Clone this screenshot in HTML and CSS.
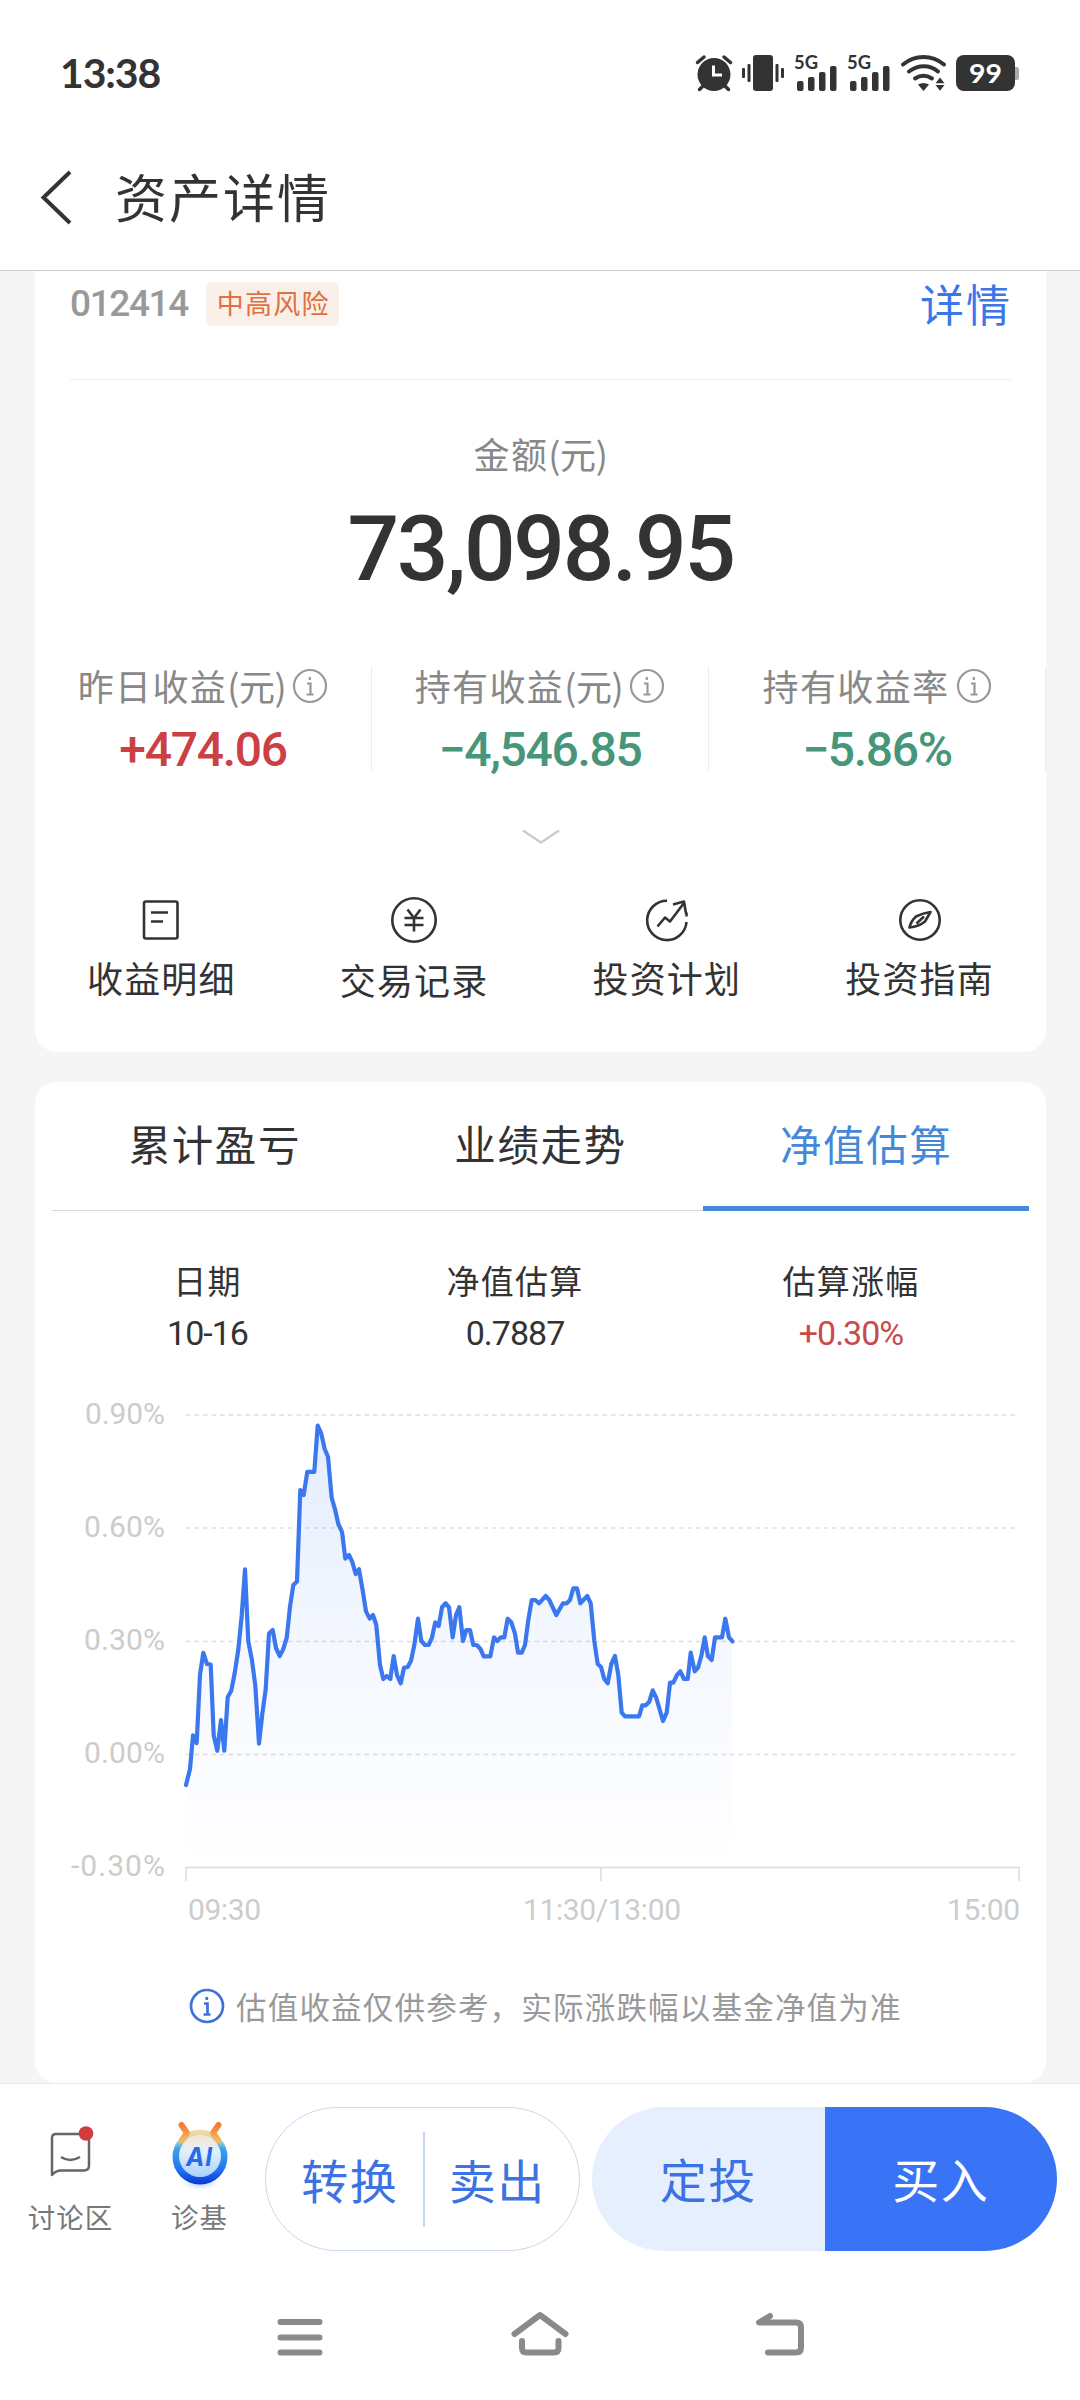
FILE: index.html
```html
<!DOCTYPE html>
<html lang="zh-CN">
<head>
<meta charset="utf-8">
<title>资产详情</title>
<link rel="stylesheet" href="styles.css">
</head>
<body>
<div class="screen">
  <div class="status-bar">
    <span class="clock">13:38</span>
    <div class="status-icons">
      <svg width="36" height="36" viewBox="0 0 36 36"><circle cx="18" cy="19.5" r="16.5" fill="#333"/><path d="M1.5 7.5 8 2M34.500 7.500 28 2M7 31l-3.500 3.500M29 31l3.500 3.500" stroke="#333" stroke-width="3.500" stroke-linecap="round"/><path d="M17.500 10.500V20H26" fill="none" stroke="#fff" stroke-width="3"/></svg>
      <svg width="42" height="36" viewBox="0 0 42 36" fill="#333"><rect x="11" y="0" width="20" height="36" rx="3"/><rect x="0" y="13" width="3" height="10" rx="1"/><rect x="5.500" y="9" width="3" height="18" rx="1"/><rect x="33.500" y="9" width="3" height="18" rx="1"/><rect x="39" y="13" width="3" height="10" rx="1"/></svg>
      <svg width="43" height="36" viewBox="0 0 43 36" fill="#333"><text class="net" x="0" y="14" textLength="24" lengthAdjust="spacingAndGlyphs">5G</text><rect x="3" y="26" width="6.500" height="10" rx="2"/><rect x="14" y="22" width="6.500" height="14" rx="2"/><rect x="25" y="17" width="6.500" height="19" rx="2"/><rect x="36" y="11" width="6.500" height="25" rx="2"/></svg>
      <svg width="44" height="36" viewBox="0 0 44 36" fill="#333"><text class="net" x="0" y="14" textLength="24" lengthAdjust="spacingAndGlyphs">5G</text><rect x="3" y="26" width="6.500" height="10" rx="2"/><rect x="14" y="22" width="6.500" height="14" rx="2"/><rect x="25" y="17" width="6.500" height="19" rx="2"/><rect x="36" y="11" width="6.500" height="25" rx="2"/></svg>
      <svg width="45" height="36" viewBox="0 0 45 36"><path d="M2 9.500C14-.500 31-.500 43 9.500M8 16.500c9-7 21-7 29 0M14 23.500c6-4 11-4 17 0" fill="none" stroke="#333" stroke-width="4" stroke-linecap="round"/><path d="M17 29.500q5.500-3 11 0L22.500 36zM34.500 28.300 39 22.500l4.500 5.800zM34.500 30h9L39 35.800z" fill="#333"/></svg>
      <svg width="63" height="36" viewBox="0 0 63 36"><rect x="56" y="12" width="7" height="13" rx="2.500" fill="#aaa"/><rect width="59" height="36" rx="8" fill="#333"/><text class="battery" x="13" y="28" textLength="33" lengthAdjust="spacingAndGlyphs">99</text></svg>
    </div>
  </div>
  <header class="title-bar">
    <svg width="36" height="56" viewBox="0 0 36 56"><path d="M32 3 5.500 28.500 32 54" fill="none" stroke="#333" stroke-width="4"/></svg>
    <h1 class="title">资产详情</h1>
  </header>
  <main class="content">
    <section class="card asset">
      <div class="fund-row">
        <span class="code">012414</span><span class="risk">中高风险</span><a class="detail">详情</a>
      </div>
      <div class="amount-label">金额<span class="unit">(元)</span></div>
      <div class="amount">73,098.95</div>
      <div class="stats">
        <div class="stat"><div class="stat-label"><span>昨日收益<span class="unit">(元)</span></span><svg class="info" viewBox="0 0 36 36"><circle cx="18" cy="18" r="16"/><path d="M15 15.500h3.500V26M14.500 26.500h7M17.800 9v3"/></svg></div><div class="stat-value up">+474.06</div></div>
        <div class="stat"><div class="stat-label"><span>持有收益<span class="unit">(元)</span></span><svg class="info" viewBox="0 0 36 36"><circle cx="18" cy="18" r="16"/><path d="M15 15.500h3.500V26M14.500 26.500h7M17.800 9v3"/></svg></div><div class="stat-value down">−4,546.85</div></div>
        <div class="stat"><div class="stat-label"><span>持有收益率</span><svg class="info" viewBox="0 0 36 36"><circle cx="18" cy="18" r="16"/><path d="M15 15.500h3.500V26M14.500 26.500h7M17.800 9v3"/></svg></div><div class="stat-value down">−5.86%</div></div>
      </div>
      <svg class="expand" width="40" height="16" viewBox="0 0 40 16"><path d="M2 1.500 20 13.500 38 1.500" fill="none" stroke="#ccc" stroke-width="2.500"/></svg>
      <nav class="actions">
        <a class="action"><svg class="line-icon" viewBox="0 0 48 48"><rect x="7" y="5.500" width="33.500" height="37" rx="2"/><path d="M14 16.500h17M14 25.500h12"/></svg><span>收益明细</span></a>
        <a class="action action-low"><svg class="line-icon" viewBox="0 0 48 48"><circle cx="24" cy="24" r="21.700"/><path d="M17.500 13.500 24 22l6.500-8.500M14.500 22h19M14.500 29h19M24 22v13.500"/></svg><span>交易记录</span></a>
        <a class="action"><svg class="line-icon" viewBox="0 0 48 48"><path d="M24 4.700A19.700 19.700 0 1 0 43.500 26M43.500 20.500V16.500M14.500 30.500l7.500-9 5 4L41 7M30 8.500l11-3 2 12"/></svg><span>投资计划</span></a>
        <a class="action"><svg class="line-icon" viewBox="0 0 48 48"><circle cx="24" cy="24" r="19.700"/><path d="M34.500 16 29 25.500Q23 30.500 13.500 31.500 15 25 20 20.500 27 17 34.500 16zM28 20.500l-7.500 7"/></svg><span>投资指南</span></a>
      </nav>
    </section>
    <section class="card trend">
      <div class="tabs"><a class="tab">累计盈亏</a><a class="tab">业绩走势</a><a class="tab active">净值估算</a></div>
      <div class="figures">
        <div class="figure"><div class="figure-label">日期</div><div class="figure-value">10-16</div></div>
        <div class="figure"><div class="figure-label">净值估算</div><div class="figure-value">0.7887</div></div>
        <div class="figure"><div class="figure-label">估算涨幅</div><div class="figure-value up-light">+0.30%</div></div>
      </div>
      <svg class="chart" width="980" height="560" viewBox="0 0 980 560">
        <defs><linearGradient id="area" x1="0" y1="45" x2="0" y2="487" gradientUnits="userSpaceOnUse"><stop offset="0" stop-color="#3c78f0" stop-opacity=".14"/><stop offset=".5" stop-color="#3c78f0" stop-opacity=".055"/><stop offset="1" stop-color="#3c78f0" stop-opacity="0"/></linearGradient></defs>
        <path d="M126 35H955M126 148H955M126 261.500H955M126 374.500H955" fill="none" stroke="#dedede" stroke-width="1.500" stroke-dasharray="4.500 4"/>
        <path d="M126 501V487.500H959V501M541 487.500V501" fill="none" stroke="#dcdcdc" stroke-width="1.500"/>
        <path fill="url(#area)" d="M126 487V405L130 389 133 355.400 136.700 363 140 294.600 143.300 272.900 147 284 150.700 284.600 153.700 355.400 157.300 370.700 161 340 164.300 370.700 167.700 317 171.300 310.700 174.700 293 178.300 269.600 181.700 235.700 185 189.300 188.300 261.400 192 280.400 195.300 305.400 199 363.600 202.300 334 205.700 309 209 253.600 212.700 250 216 268 219.700 276 223 269.600 226.700 258 230 226.800 233.300 205 237 201.400 240.300 110 243.700 115 247.300 91.800 254.300 91.800 257.700 45.700 261.300 53.600 264.700 69 268 76.800 271.700 117.900 275 129.300 278.300 144 282 151.800 285.300 178.600 289 175 292.300 182 295.700 194 299 189.300 302.700 210.700 306 231.400 309.700 238.600 313 235 316.300 245 320 285 323.300 299 326.700 296 330.300 299 333.700 276 337 295 340.700 303.300 344 287.700 347.700 287 351 280.700 354.300 265 358 238.700 361.300 261 365 265 368.700 265 372 257.300 375.300 242.300 378.700 246 382 227.300 385.700 223.300 389 227.300 392.700 257.300 396 235 399.300 227.300 403 261 406.300 250 410 250 413.300 265 416.700 265 420.300 268.700 423.700 276.300 430.300 276.300 434 257.300 437.300 261 440.700 257.300 444.300 257.300 447.700 238.700 451.300 242.300 455 253.700 458 272.700 461.700 272.700 465 265 468.300 240 471.700 220 475.300 220 479 223.300 485.700 216 489.300 220 496.300 235 503 223.300 506.700 223.300 510 220 513.300 208.300 517 208.300 520.300 223.300 527.300 216 530.700 223.300 534.300 261 537.700 284 541 287 544.300 299 547.700 303.300 551.300 284 555 276 558.300 295 561.700 332.700 565 336.300 579 336.300 582.300 325.300 585.700 325.300 589.300 321.700 592.700 310.300 596.300 318 603 341 606.700 332.700 610 302.700 613.300 302.700 617 295 620.300 291.300 624 299 627.700 299 630.700 272.700 634.700 291.300 638 287.700 641.300 276 644.700 257.300 648 276.300 651.700 280 655 257.300 662 257.300 665.300 238.700 669 257.300 672 261.300V487z"/>
        <polyline fill="none" stroke="#3b77ee" stroke-width="4.200" stroke-linejoin="round" stroke-linecap="round" points="126 405 130 389 133 355.400 136.700 363 140 294.600 143.300 272.900 147 284 150.700 284.600 153.700 355.400 157.300 370.700 161 340 164.300 370.700 167.700 317 171.300 310.700 174.700 293 178.300 269.600 181.700 235.700 185 189.300 188.300 261.400 192 280.400 195.300 305.400 199 363.600 202.300 334 205.700 309 209 253.600 212.700 250 216 268 219.700 276 223 269.600 226.700 258 230 226.800 233.300 205 237 201.400 240.300 110 243.700 115 247.300 91.800 254.300 91.800 257.700 45.700 261.300 53.600 264.700 69 268 76.800 271.700 117.900 275 129.300 278.300 144 282 151.800 285.300 178.600 289 175 292.300 182 295.700 194 299 189.300 302.700 210.700 306 231.400 309.700 238.600 313 235 316.300 245 320 285 323.300 299 326.700 296 330.300 299 333.700 276 337 295 340.700 303.300 344 287.700 347.700 287 351 280.700 354.300 265 358 238.700 361.300 261 365 265 368.700 265 372 257.300 375.300 242.300 378.700 246 382 227.300 385.700 223.300 389 227.300 392.700 257.300 396 235 399.300 227.300 403 261 406.300 250 410 250 413.300 265 416.700 265 420.300 268.700 423.700 276.300 430.300 276.300 434 257.300 437.300 261 440.700 257.300 444.300 257.300 447.700 238.700 451.300 242.300 455 253.700 458 272.700 461.700 272.700 465 265 468.300 240 471.700 220 475.300 220 479 223.300 485.700 216 489.300 220 496.300 235 503 223.300 506.700 223.300 510 220 513.300 208.300 517 208.300 520.300 223.300 527.300 216 530.700 223.300 534.300 261 537.700 284 541 287 544.300 299 547.700 303.300 551.300 284 555 276 558.300 295 561.700 332.700 565 336.300 579 336.300 582.300 325.300 585.700 325.300 589.300 321.700 592.700 310.300 596.300 318 603 341 606.700 332.700 610 302.700 613.300 302.700 617 295 620.300 291.300 624 299 627.700 299 630.700 272.700 634.700 291.300 638 287.700 641.300 276 644.700 257.300 648 276.300 651.700 280 655 257.300 662 257.300 665.300 238.700 669 257.300 672.500 261.300"/>
        <g class="axis" text-anchor="end">
          <text x="105" y="43.500" textLength="80">0.90%</text><text x="105" y="156.500" textLength="81">0.60%</text><text x="105" y="269.500" textLength="81">0.30%</text><text x="105" y="382.500" textLength="81">0.00%</text><text x="105" y="495.500" textLength="94">-0.30%</text>
        </g>
        <g class="axis">
          <text x="128" y="540" textLength="73">09:30</text><text x="463" y="540" textLength="158">11:30/13:00</text><text x="887" y="540" textLength="73">15:00</text>
        </g>
      </svg>
      <div class="note"><svg class="info info-blue" viewBox="0 0 36 36"><circle cx="18" cy="18" r="16"/><path d="M15 15.500h3.500V26M14.500 26.500h7M17.800 9v3"/></svg><span>估值收益仅供参考，实际涨跌幅以基金净值为准</span></div>
    </section>
  </main>
  <footer class="trade-bar">
    <a class="shortcut"><svg width="60" height="72" viewBox="0 0 60 72"><path d="M11 55.500V19q0-4 4-4H42q6 0 6 6V46.500q0 5-5 5H20q-5 0-9 4.500z" fill="none" stroke="#666" stroke-width="2.500" stroke-linejoin="round"/><path d="M20 38q9 6 19 0" fill="none" stroke="#666" stroke-width="2.500"/><circle cx="45" cy="14.500" r="7.300" fill="#d23c40"/></svg><span>讨论区</span></a>
    <a class="shortcut"><svg width="60" height="72" viewBox="0 0 60 72">
      <defs><linearGradient id="ring" x1="0" y1="0" x2="0" y2="1"><stop offset="0" stop-color="#ffd79a"/><stop offset=".18" stop-color="#c9d9c4"/><stop offset=".35" stop-color="#39a4ee"/><stop offset=".75" stop-color="#216fee"/><stop offset="1" stop-color="#0733d8"/></linearGradient><linearGradient id="face" x1="0" y1="0" x2="0" y2="1"><stop offset="0" stop-color="#f7e6cd"/><stop offset=".4" stop-color="#e1f0fc"/><stop offset="1" stop-color="#a9d2fb"/></linearGradient><linearGradient id="horn" x1="0" y1="0" x2="0" y2="1"><stop offset="0" stop-color="#ee7f35"/><stop offset="1" stop-color="#f8b55c"/></linearGradient><radialGradient id="glow"><stop offset="0" stop-color="#9cb4ff"/><stop offset="1" stop-color="#fff" stop-opacity="0"/></radialGradient></defs>
      <ellipse cx="30" cy="63" rx="22" ry="10" fill="url(#glow)"/>
      <circle cx="30" cy="38" r="27.500" fill="url(#ring)"/><path d="M11.500 6 17 14 12 21M48.500 6 43 14 48 21" fill="none" stroke="url(#horn)" stroke-width="6" stroke-linecap="round" stroke-linejoin="round"/><circle cx="30" cy="37" r="21" fill="url(#face)"/><text class="ai" x="16" y="47" textLength="27" lengthAdjust="spacingAndGlyphs">AI</text></svg><span>诊基</span></a>
    <div class="pill outline"><a>转换</a><i class="split"></i><a>卖出</a></div>
    <div class="pill solid"><a class="plan">定投</a><a class="buy">买入</a></div>
  </footer>
  <div class="system-nav">
    <svg width="60" height="50" viewBox="0 0 60 50"><path d="M10.500 14h39M10.500 29.500h39M10.500 44.500h39"/></svg>
    <svg width="60" height="50" viewBox="0 0 60 50"><path d="M4.500 26 30 7 55.500 26M12 33V40q0 4.500 4.500 4.500H44q4.500 0 4.500-4.500V33"/></svg>
    <svg width="60" height="50" viewBox="0 0 60 50"><path d="M20 8 9 14.500H46q5 0 5 5V39.500q0 5-5 5H18"/></svg>
  </div>
</div>
</body>
</html>
```
FILE: styles.css
```css
* { box-sizing: border-box; }
body { margin: 0; background: #fff; color: #333; font-family: "Noto Sans CJK SC", sans-serif; }
.screen { width: 1080px; height: 2400px; display: flex; flex-direction: column; overflow: hidden; background: #fff; }
svg { display: block; flex: none; overflow: visible; }

.status-bar { height: 124px; padding: 48px 60px 0 60px; display: flex; justify-content: space-between; align-items: flex-start; }
.clock { font: 700 41px/50px Lato, sans-serif; letter-spacing: -1.1px; }
.status-icons { display: flex; gap: 10px; margin: 7px 1px 0 0; }
.net { font: 700 18px Lato, sans-serif; }
.battery { font: 700 27px Lato, sans-serif; fill: #fff; }

.title-bar { height: 147px; padding-left: 38px; display: flex; align-items: center; border-bottom: 1px solid #ccc; }
.title { margin: -3px 0 0 41px; font-size: 52px; line-height: 60px; font-weight: 400; letter-spacing: 2px; }

.content { height: 1812px; padding: 0 34px 0 35px; background: #f5f5f5; display: flex; flex-direction: column; gap: 30px; }
.card { background: #fff; border-radius: 22px; }
.asset { height: 781px; border-top-left-radius: 0; border-top-right-radius: 0; }
.fund-row { height: 109px; margin: 0 35px; padding-bottom: 42px; display: flex; align-items: center; border-bottom: 1px solid #eee; }
.code { font: 500 37px/44px Roboto, sans-serif; letter-spacing: -1.4px; color: #999; }
.risk { margin-left: 18px; padding: 0 9px 0 11px; height: 44px; border-radius: 5px; background: #fbefe9; color: #e0703f; font-size: 27px; line-height: 42px; letter-spacing: 1.2px; }
.detail { margin: -3px -1px 0 auto; color: #3d76e8; font-size: 44px; line-height: 60px; letter-spacing: 2px; }
.unit { letter-spacing: -0.4px; }
.amount-label { margin-top: 49px; text-align: center; color: #888; font-size: 36px; line-height: 48px; letter-spacing: 1.4px; }
.amount { margin-top: 22px; text-align: center; font: 500 91px/100px Roboto, sans-serif; letter-spacing: -2.4px; }
.stats { margin-top: 68px; display: grid; grid-template-columns: repeat(3, 1fr); }
.stat { height: 104px; border-right: 1px solid #ececec; }
.stat-label { display: flex; justify-content: center; align-items: center; gap: 6px; height: 38px; color: #888; font-size: 36px; line-height: 34px; letter-spacing: 1.4px; }
.stat-label > span { margin-top: -3px; }
.info { width: 36px; height: 36px; fill: none; stroke: #999; stroke-width: 2.2; }
.stat-value { margin-top: 21px; text-align: center; font: 500 48px/48px Roboto, sans-serif; letter-spacing: -1.3px; }
.up { color: #cb4044; }
.down { color: #47967a; }
.expand { margin: 58px auto 0; }
.actions { margin-top: 51px; display: grid; grid-template-columns: repeat(4, 1fr); }
.action { display: flex; flex-direction: column; align-items: center; gap: 11px; font-size: 36px; line-height: 44px; letter-spacing: 1.2px; }
.action-low { gap: 13px; }
.line-icon { width: 48px; height: 48px; fill: none; stroke: #333; stroke-width: 2.6; stroke-linejoin: round; }

.trend { height: 1001px; }
.tabs { margin: 0 17px; height: 129px; display: grid; grid-template-columns: repeat(3, 1fr); box-shadow: inset 0 -1px #d8d8d8; }
.tab { text-align: center; font-size: 41.5px; line-height: 122px; letter-spacing: 1.6px; }
.active { color: #4489d8; border-bottom: 5px solid #468ad6; }
.figures { margin: 49px 34px 0; display: grid; grid-template-columns: 277px 338px 334px; text-align: center; }
.figure-label { font-size: 33px; line-height: 40px; letter-spacing: 1.3px; }
.figure-value { margin-top: 13px; font: 400 34px/40px Roboto, sans-serif; letter-spacing: -1px; }
.up-light { color: #c94a4d; }
.chart { margin: 27px 0 0 25px; }
.axis { font: 400 30px Roboto, sans-serif; fill: #ccc; }
.note { margin: 46px 0 0 154px; display: flex; align-items: center; gap: 11px; height: 40px; color: #999; font-size: 30.5px; line-height: 38px; letter-spacing: 1.2px; white-space: nowrap; }
.info-blue { stroke: #3d72dd; stroke-width: 2.7; }

.trade-bar { height: 187px; border-top: 1px solid #e9e9e9; padding: 23px 23px 0 6px; display: flex; }
.shortcut { width: 129px; display: flex; flex-direction: column; align-items: center; gap: 5px; color: #777; font-size: 27.5px; line-height: 40px; letter-spacing: 1px; }
.shortcut svg { margin-top: 12px; }
.ai { font: italic 700 26px Inter, sans-serif; fill: #2869e8; }
.pill { height: 144px; border-radius: 72px; display: flex; align-items: center; font-size: 47px; line-height: 60px; letter-spacing: 1.6px; text-align: center; color: #3d72e3; }
.pill a { flex: 1; }
.outline { width: 315px; margin-left: 1px; border: 1px solid #cad7ee; padding: 0 9px 0 11px; }
.split { width: 2px; height: 95px; background: #c5d4f8; }
.solid { width: 465px; margin-left: 12px; overflow: hidden; }
.solid a { line-height: 142px; height: 144px; }
.plan { background: #e6effe; }
.buy { background: #3974f6; color: #fff; }
.system-nav { height: 130px; padding-top: 38px; display: flex; justify-content: center; gap: 180px; }
.system-nav svg { fill: none; stroke: #8a8a8a; stroke-width: 6; stroke-linecap: round; stroke-linejoin: round; }
```
